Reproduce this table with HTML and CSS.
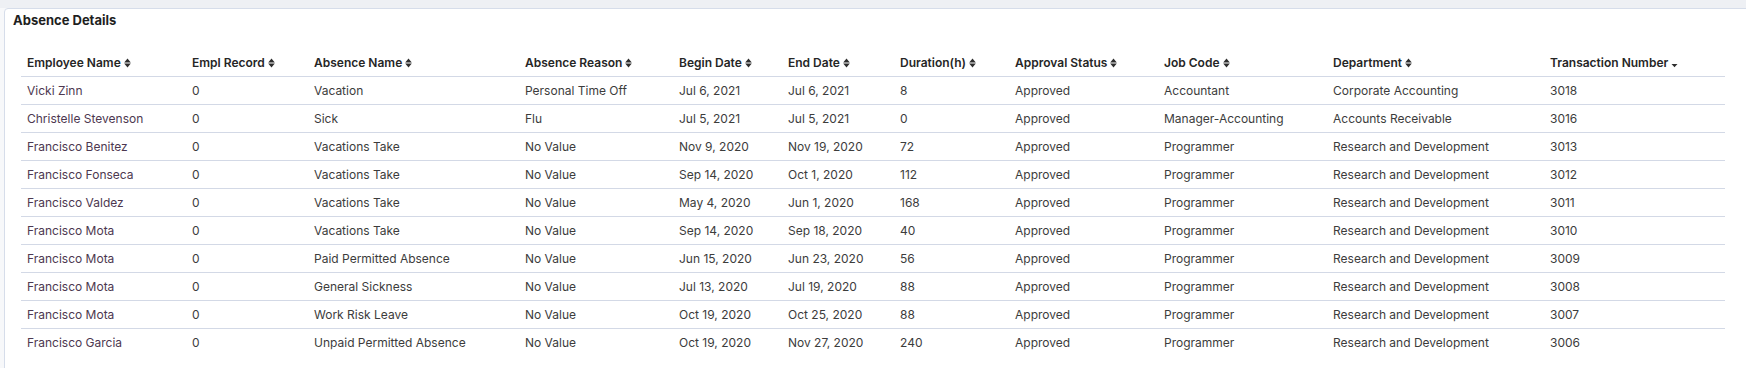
FILE: index.html
```html
<!DOCTYPE html>
<html lang="en">
<head>
<meta charset="utf-8">
<title>Absence Details</title>
<link rel="stylesheet" href="styles.css">
</head>
<body>
<div class="topstrip"></div>
<section class="card">
  <h2 class="card-title">Absence Details</h2>
  <table class="grid">
    <colgroup>
      <col class="c1"><col class="c2"><col class="c3"><col class="c4"><col class="c5"><col class="c6"><col class="c7"><col class="c8"><col class="c9"><col class="c10"><col class="c11">
    </colgroup>
    <thead>
      <tr>
        <th>Employee Name<svg class="sort" viewBox="0 0 7 10"><path d="M0.2 4.4 L3.5 0.4 L6.8 4.4 Z M0.2 5.6 L3.5 9.6 L6.8 5.6 Z"/></svg></th>
        <th>Empl Record<svg class="sort" viewBox="0 0 7 10"><path d="M0.2 4.4 L3.5 0.4 L6.8 4.4 Z M0.2 5.6 L3.5 9.6 L6.8 5.6 Z"/></svg></th>
        <th>Absence Name<svg class="sort" viewBox="0 0 7 10"><path d="M0.2 4.4 L3.5 0.4 L6.8 4.4 Z M0.2 5.6 L3.5 9.6 L6.8 5.6 Z"/></svg></th>
        <th>Absence Reason<svg class="sort" viewBox="0 0 7 10"><path d="M0.2 4.4 L3.5 0.4 L6.8 4.4 Z M0.2 5.6 L3.5 9.6 L6.8 5.6 Z"/></svg></th>
        <th>Begin Date<svg class="sort" viewBox="0 0 7 10"><path d="M0.2 4.4 L3.5 0.4 L6.8 4.4 Z M0.2 5.6 L3.5 9.6 L6.8 5.6 Z"/></svg></th>
        <th>End Date<svg class="sort" viewBox="0 0 7 10"><path d="M0.2 4.4 L3.5 0.4 L6.8 4.4 Z M0.2 5.6 L3.5 9.6 L6.8 5.6 Z"/></svg></th>
        <th>Duration(h)<svg class="sort" viewBox="0 0 7 10"><path d="M0.2 4.4 L3.5 0.4 L6.8 4.4 Z M0.2 5.6 L3.5 9.6 L6.8 5.6 Z"/></svg></th>
        <th>Approval Status<svg class="sort" viewBox="0 0 7 10"><path d="M0.2 4.4 L3.5 0.4 L6.8 4.4 Z M0.2 5.6 L3.5 9.6 L6.8 5.6 Z"/></svg></th>
        <th>Job Code<svg class="sort" viewBox="0 0 7 10"><path d="M0.2 4.4 L3.5 0.4 L6.8 4.4 Z M0.2 5.6 L3.5 9.6 L6.8 5.6 Z"/></svg></th>
        <th>Department<svg class="sort" viewBox="0 0 7 10"><path d="M0.2 4.4 L3.5 0.4 L6.8 4.4 Z M0.2 5.6 L3.5 9.6 L6.8 5.6 Z"/></svg></th>
        <th>Transaction Number<svg class="sort" viewBox="0 0 7 10"><path d="M0.5 6 L3.5 9.2 L6.5 6 Z"/></svg></th>
      </tr>
    </thead>
    <tbody>
      <tr><td class="name">Vicki Zinn</td><td>0</td><td>Vacation</td><td>Personal Time Off</td><td>Jul 6, 2021</td><td>Jul 6, 2021</td><td>8</td><td>Approved</td><td>Accountant</td><td>Corporate Accounting</td><td>3018</td></tr>
      <tr><td class="name">Christelle Stevenson</td><td>0</td><td>Sick</td><td>Flu</td><td>Jul 5, 2021</td><td>Jul 5, 2021</td><td>0</td><td>Approved</td><td>Manager-Accounting</td><td>Accounts Receivable</td><td>3016</td></tr>
      <tr><td class="name">Francisco Benitez</td><td>0</td><td>Vacations Take</td><td>No Value</td><td>Nov 9, 2020</td><td>Nov 19, 2020</td><td>72</td><td>Approved</td><td>Programmer</td><td>Research and Development</td><td>3013</td></tr>
      <tr><td class="name">Francisco Fonseca</td><td>0</td><td>Vacations Take</td><td>No Value</td><td>Sep 14, 2020</td><td>Oct 1, 2020</td><td>112</td><td>Approved</td><td>Programmer</td><td>Research and Development</td><td>3012</td></tr>
      <tr><td class="name">Francisco Valdez</td><td>0</td><td>Vacations Take</td><td>No Value</td><td>May 4, 2020</td><td>Jun 1, 2020</td><td>168</td><td>Approved</td><td>Programmer</td><td>Research and Development</td><td>3011</td></tr>
      <tr><td class="name">Francisco Mota</td><td>0</td><td>Vacations Take</td><td>No Value</td><td>Sep 14, 2020</td><td>Sep 18, 2020</td><td>40</td><td>Approved</td><td>Programmer</td><td>Research and Development</td><td>3010</td></tr>
      <tr><td class="name">Francisco Mota</td><td>0</td><td>Paid Permitted Absence</td><td>No Value</td><td>Jun 15, 2020</td><td>Jun 23, 2020</td><td>56</td><td>Approved</td><td>Programmer</td><td>Research and Development</td><td>3009</td></tr>
      <tr><td class="name">Francisco Mota</td><td>0</td><td>General Sickness</td><td>No Value</td><td>Jul 13, 2020</td><td>Jul 19, 2020</td><td>88</td><td>Approved</td><td>Programmer</td><td>Research and Development</td><td>3008</td></tr>
      <tr><td class="name">Francisco Mota</td><td>0</td><td>Work Risk Leave</td><td>No Value</td><td>Oct 19, 2020</td><td>Oct 25, 2020</td><td>88</td><td>Approved</td><td>Programmer</td><td>Research and Development</td><td>3007</td></tr>
      <tr><td class="name">Francisco Garcia</td><td>0</td><td>Unpaid Permitted Absence</td><td>No Value</td><td>Oct 19, 2020</td><td>Nov 27, 2020</td><td>240</td><td>Approved</td><td>Programmer</td><td>Research and Development</td><td>3006</td></tr>
    </tbody>
  </table>
</section>
</body>
</html>
```
FILE: styles.css
```css
html, body {
  margin: 0;
  padding: 0;
}
body {
  background: #f7f8fa;
  font-family: Inter, "Noto Sans", "Liberation Sans", sans-serif;
  color: #333;
  overflow: hidden;
  width: 1746px;
  height: 368px;
}
.topstrip {
  height: 8px;
  background: #eef0f4;
}
.card {
  margin-left: 4px;
  margin-right: -20px;
  background: #fff;
  border: 1px solid #d6ddea;
  border-radius: 4px 0 0 0;
  padding: 3px 0 20px 0;
  min-height: 360px;
  box-sizing: border-box;
}
.card-title {
  margin: 0 0 21px 8px;
  font-size: 13px;
  line-height: 16px;
  font-weight: 700;
  color: #1f1f1f;
}
.grid {
  margin-left: 16px;
  width: 1704px;
  border-collapse: collapse;
  table-layout: fixed;
  font-size: 12px;
}
.c1 { width: 165px; }
.c2 { width: 122px; }
.c3 { width: 211px; }
.c4 { width: 154px; }
.c5 { width: 109px; }
.c6 { width: 112px; }
.c7 { width: 115px; }
.c8 { width: 149px; }
.c9 { width: 169px; }
.c10 { width: 217px; }
.c11 { width: 181px; }
.grid th,
.grid td {
  height: 27px;
  padding: 0 6px;
  text-align: left;
  vertical-align: middle;
  white-space: nowrap;
  border-bottom: 1px solid #d3d9e6;
  line-height: 14px;
}
.grid tbody tr:last-child td {
  border-bottom: none;
}
.grid th {
  font-weight: 600;
  color: #262626;
}
.grid td {
  color: #3c3c3c;
}
.grid td.name {
  color: #4d3850;
}
.sort {
  width: 7px;
  height: 10px;
  margin-left: 3px;
  vertical-align: -1px;
  fill: #2e2e2e;
}
```
